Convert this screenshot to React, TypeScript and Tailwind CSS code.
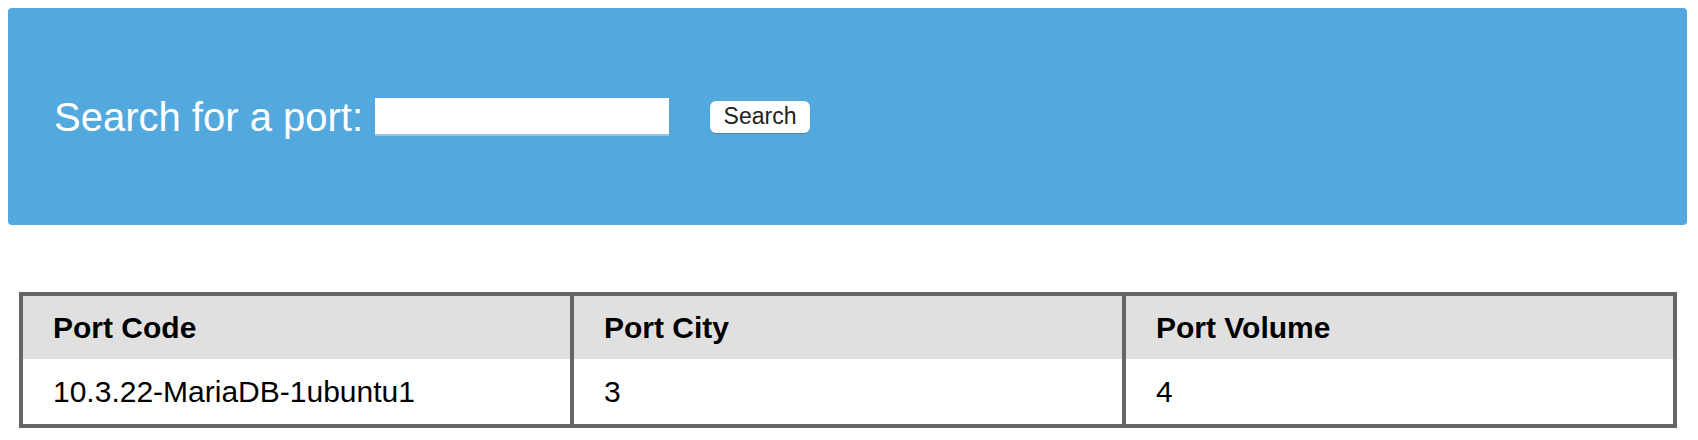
import React from "react";

export default function App() {
  const cols = ["Port Code", "Port City", "Port Volume"];
  const vals = ["10.3.22-MariaDB-1ubuntu1", "3", "4"];
  return (
    <div className="min-h-[440px] bg-white pt-2 [font-family:'Liberation_Sans',Arial,Helvetica,sans-serif]">
      <div className="ml-2 mr-[11px] flex h-[217px] items-center rounded-[4px] bg-[#53a9dd] pl-[46px]">
        <span className="text-[40px] leading-none text-white">Search for a port:</span>
        <input
          type="text"
          className="ml-[12px] h-[38px] w-[294px] border-0 border-b-2 border-[#9cc3dd] bg-white outline-none"
        />
        <button className="ml-[41px] h-[32px] w-[100px] rounded-[6px] bg-white text-[23px] leading-none text-[#222] shadow-[0_1px_1px_rgba(0,0,0,0.2)]">
          Search
        </button>
      </div>
      <table className="mx-[19px] mt-[67px] w-[1658px] table-fixed border-separate border-spacing-0 border-4 border-[#676665]">
        <colgroup>
          <col className="w-[547px]" />
          <col className="w-[552px]" />
          <col className="w-[551px]" />
        </colgroup>
        <thead>
          <tr>
            {cols.map((c, i) => (
              <th
                key={c}
                className={`h-[63px] bg-[#e0e0e0] pl-[30px] text-left align-middle text-[30px] font-bold leading-none text-black ${i > 0 ? "border-l-4 border-[#676665]" : ""}`}
              >
                {c}
              </th>
            ))}
          </tr>
        </thead>
        <tbody>
          <tr>
            {vals.map((v, i) => (
              <td
                key={i}
                className={`h-[65px] bg-white pl-[30px] text-left align-middle text-[30px] leading-none text-black ${i > 0 ? "border-l-4 border-[#676665]" : ""}`}
              >
                {v}
              </td>
            ))}
          </tr>
        </tbody>
      </table>
    </div>
  );
}
